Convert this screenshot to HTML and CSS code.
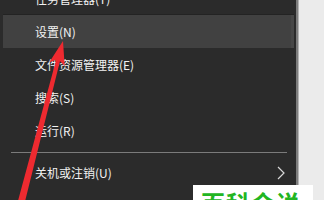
FILE: index.html
```html
<!DOCTYPE html>
<html lang="zh-CN">
<head>
<meta charset="utf-8">
<title>Win+X 菜单</title>
<link rel="stylesheet" href="styles.css">
</head>
<body>
<div class="screen">
  <div class="menu">
    <ul class="items">
      <li class="item">任务管理器(T)</li>
      <li class="item active">设置(N)</li>
      <li class="item">文件资源管理器(E)</li>
      <li class="item">搜索(S)</li>
      <li class="item">运行(R)</li>
      <li class="sep"></li>
      <li class="item sub">关机或注销(U)
        <svg class="chev" width="8" height="14" viewBox="0 0 8 14"><path d="M1 1 L7 7 L1 13" fill="none" stroke="#d8d8d8" stroke-width="1.2"/></svg>
      </li>
      <li class="item">桌面(D)</li>
    </ul>
  </div>
  <div class="desk"></div>

  <svg class="arrow" width="324" height="200" viewBox="0 0 324 200">
    <polygon points="63,41 64.7,66.2 60,60.9 23.9,205.9 17.1,204.1 56.1,59.9 49.3,62.2" fill="#ee2a30"/>
  </svg>
  <div class="mark">百科全说</div>
</div>
</body>
</html>
```
FILE: styles.css
```css
html, body {
  margin: 0;
  padding: 0;
  width: 324px;
  height: 200px;
  overflow: hidden;
  background: #ebebeb;
}
.screen {
  position: relative;
  display: flex;
  width: 324px;
  height: 200px;
  overflow: hidden;
  font-family: "Noto Sans CJK SC", "Microsoft YaHei", sans-serif;
}
.menu {
  width: 296px;
  flex: none;
  background: #2b2b2b;
  padding: 0 2px 0 3px;
  box-sizing: border-box;
}
.items {
  list-style: none;
  margin: -18px 0 0 0;
  padding: 0;
}
.item {
  height: 33px;
  line-height: 33px;
  padding-left: 32px;
  color: #f2f2f2;
  font-size: 12px;
  display: flex;
  align-items: center;
  justify-content: space-between;
}
.item:first-child {
  border-bottom: 1px solid #232323;
  height: 32px;
}
.item.active {
  background: #414141;
  box-shadow: inset -3px 0 0 #474747;
}
.sep {
  height: 9px;
  display: flex;
  align-items: center;
  padding: 0 7px 0 8px;
}
.sep::before {
  content: "";
  flex: 1;
  height: 1px;
  background: #7b7b7b;
  margin-top: 1px;
}
.sub .chev {
  margin-right: 9px;
}
.desk {
  flex: 1;
  background: #ebebeb;
  border-left: 2px solid #7d7d7d;
  box-shadow: inset 1px 0 0 #b4b4b4;
}
.arrow {
  position: absolute;
  left: 0;
  top: 0;
}
.mark {
  position: absolute;
  left: 193px;
  top: 185px;
  width: 120px;
  height: 40px;
  background: #ffffff;
  color: #22b522;
  font-weight: bold;
  font-size: 24px;
  line-height: 24px;
  padding: 6px 0 0 8px;
  box-sizing: border-box;
  letter-spacing: 1px;
}
```
